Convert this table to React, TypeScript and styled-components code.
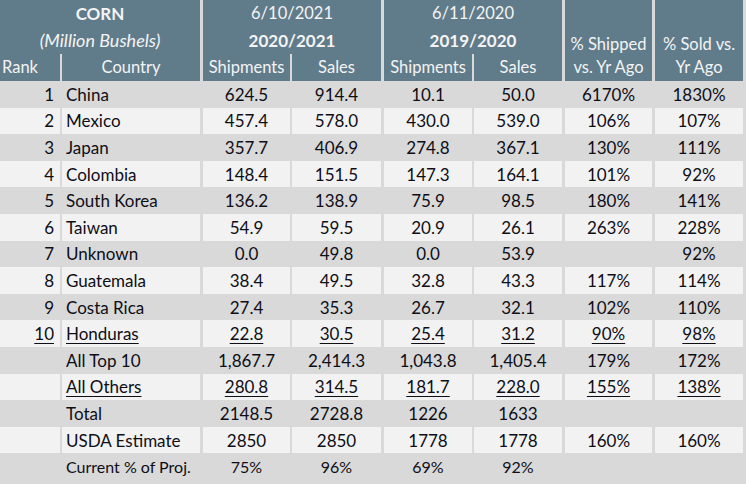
import { FC } from "react";
import styled, { createGlobalStyle } from "styled-components";

const GlobalStyle = createGlobalStyle`
  html, body {
    margin: 0;
    padding: 0;
    background: #d9d9d9;
  }
  body {
    font-family: Lato, "Open Sans", "Liberation Sans", sans-serif;
  }
`;

// column widths include the gap to the left of each column
const COLS = "60px 140px 90px 91px 91px 90px 90px 91px";
const GAPS = [0, 2, 3, 2, 3, 2, 3, 3];

const Sheet = styled.div`
  width: 746px;
  height: 484px;
  overflow: hidden;
  background: #d9d9d9;
  color: #0e0e16;
`;

const Head = styled.div`
  display: grid;
  grid-template-columns: ${COLS};
  grid-template-rows: 27px 27px 27px;
`;

const HeadCell = styled.div<{
  $col: number;
  $span?: number;
  $row: number;
  $rowSpan?: number;
  $gap: number;
  $bold?: boolean;
  $italic?: boolean;
  $bottom?: boolean;
}>`
  grid-column: ${(p) => p.$col} / span ${(p) => p.$span ?? 1};
  grid-row: ${(p) => p.$row} / span ${(p) => p.$rowSpan ?? 1};
  border-left: ${(p) => p.$gap}px solid #d9d9d9;
  background: #607b8a;
  color: #f4f4f4;
  font-size: ${(p) => (p.$italic ? "18px" : p.$bold ? "17px" : "16.5px")};
  font-weight: ${(p) => (p.$bold ? 700 : 400)};
  font-style: ${(p) => (p.$italic ? "italic" : "normal")};
  line-height: 23px;
  display: flex;
  flex-direction: column;
  align-items: center;
  justify-content: ${(p) => (p.$bottom ? "flex-end" : "center")};
  padding-bottom: ${(p) => (p.$bottom ? "2px" : "0")};
  text-align: center;
  white-space: nowrap;
  &.left {
    align-items: flex-start;
    padding-left: 2px;
  }
`;

const Row = styled.div<{ $small?: boolean }>`
  display: grid;
  grid-template-columns: ${COLS};
  height: 26.6px;
  font-size: ${(p) => (p.$small ? "16px" : "17px")};
`;

const Cell = styled.div<{ $gap: number; $alt: boolean; $align: "left" | "right" | "center" }>`
  border-left: ${(p) => p.$gap}px solid #d9d9d9;
  background: ${(p) => (p.$alt ? "#f2f2f2" : "transparent")};
  display: flex;
  align-items: center;
  justify-content: ${(p) =>
    p.$align === "left" ? "flex-start" : p.$align === "right" ? "flex-end" : "center"};
  padding: ${(p) => (p.$align === "left" ? "0 0 0 4px" : p.$align === "right" ? "0 6px 0 0" : "0")};
  white-space: nowrap;
`;

const Text = styled.span<{ $u?: boolean }>`
  text-decoration: ${(p) => (p.$u ? "underline" : "none")};
  text-underline-offset: 3px;
  text-decoration-thickness: 1px;
`;

type Line = { rank: string; name: string; vals: string[]; u?: boolean; small?: boolean };

const rows: Line[] = [
  { rank: "1", name: "China", vals: ["624.5", "914.4", "10.1", "50.0", "6170%", "1830%"] },
  { rank: "2", name: "Mexico", vals: ["457.4", "578.0", "430.0", "539.0", "106%", "107%"] },
  { rank: "3", name: "Japan", vals: ["357.7", "406.9", "274.8", "367.1", "130%", "111%"] },
  { rank: "4", name: "Colombia", vals: ["148.4", "151.5", "147.3", "164.1", "101%", "92%"] },
  { rank: "5", name: "South Korea", vals: ["136.2", "138.9", "75.9", "98.5", "180%", "141%"] },
  { rank: "6", name: "Taiwan", vals: ["54.9", "59.5", "20.9", "26.1", "263%", "228%"] },
  { rank: "7", name: "Unknown", vals: ["0.0", "49.8", "0.0", "53.9", "", "92%"] },
  { rank: "8", name: "Guatemala", vals: ["38.4", "49.5", "32.8", "43.3", "117%", "114%"] },
  { rank: "9", name: "Costa Rica", vals: ["27.4", "35.3", "26.7", "32.1", "102%", "110%"] },
  { rank: "10", name: "Honduras", vals: ["22.8", "30.5", "25.4", "31.2", "90%", "98%"], u: true },
  { rank: "", name: "All Top 10", vals: ["1,867.7", "2,414.3", "1,043.8", "1,405.4", "179%", "172%"] },
  { rank: "", name: "All Others", vals: ["280.8", "314.5", "181.7", "228.0", "155%", "138%"], u: true },
  { rank: "", name: "Total", vals: ["2148.5", "2728.8", "1226", "1633", "", ""] },
  { rank: "", name: "USDA Estimate", vals: ["2850", "2850", "1778", "1778", "160%", "160%"] },
  { rank: "", name: "Current % of Proj.", vals: ["75%", "96%", "69%", "92%", "", ""], small: true },
];

const Header: FC = () => (
  <Head>
    <HeadCell $col={1} $span={2} $row={1} $gap={0} $bold>
      CORN
    </HeadCell>
    <HeadCell $col={3} $span={2} $row={1} $gap={3}>
      6/10/2021
    </HeadCell>
    <HeadCell $col={5} $span={2} $row={1} $gap={3}>
      6/11/2020
    </HeadCell>
    <HeadCell $col={7} $row={1} $rowSpan={3} $gap={3} $bottom>
      <span>% Shipped</span>
      <span>vs. Yr Ago</span>
    </HeadCell>
    <HeadCell $col={8} $row={1} $rowSpan={3} $gap={3} $bottom>
      <span>% Sold vs.</span>
      <span>Yr Ago</span>
    </HeadCell>
    <HeadCell $col={1} $span={2} $row={2} $gap={0} $italic>
      (Million Bushels)
    </HeadCell>
    <HeadCell $col={3} $span={2} $row={2} $gap={3} $bold>
      2020/2021
    </HeadCell>
    <HeadCell $col={5} $span={2} $row={2} $gap={3} $bold>
      2019/2020
    </HeadCell>
    <HeadCell $col={1} $row={3} $gap={0} className="left">
      Rank
    </HeadCell>
    <HeadCell $col={2} $row={3} $gap={2}>
      Country
    </HeadCell>
    <HeadCell $col={3} $row={3} $gap={3}>
      Shipments
    </HeadCell>
    <HeadCell $col={4} $row={3} $gap={2}>
      Sales
    </HeadCell>
    <HeadCell $col={5} $row={3} $gap={3}>
      Shipments
    </HeadCell>
    <HeadCell $col={6} $row={3} $gap={2}>
      Sales
    </HeadCell>
  </Head>
);

const App: FC = () => {
  return (
    <Sheet>
      <GlobalStyle />
      <Header />
      {rows.map((r, i) => {
        const alt = i % 2 === 1;
        return (
          <Row key={r.name} $small={r.small}>
            <Cell $gap={GAPS[0]} $alt={alt} $align="right">
              <Text $u={r.u}>{r.rank}</Text>
            </Cell>
            <Cell $gap={GAPS[1]} $alt={alt} $align="left">
              <Text $u={r.u}>{r.name}</Text>
            </Cell>
            {r.vals.map((v, j) => (
              <Cell key={j} $gap={GAPS[j + 2]} $alt={alt} $align="center">
                <Text $u={r.u}>{v}</Text>
              </Cell>
            ))}
          </Row>
        );
      })}
    </Sheet>
  );
};

export default App;
